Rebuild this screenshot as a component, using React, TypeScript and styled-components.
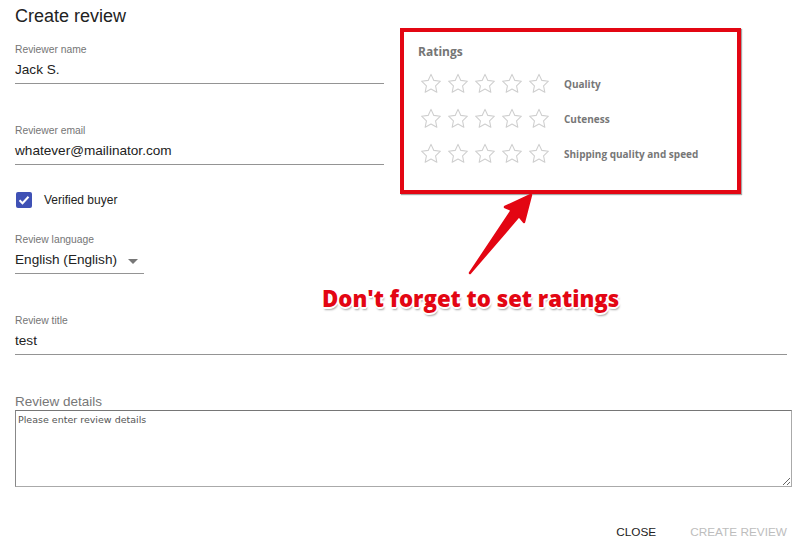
import React from "react";
import styled, { createGlobalStyle } from "styled-components";

const Global = createGlobalStyle`
  html, body { margin: 0; padding: 0; background: #fff; }
  body { font-family: "Liberation Sans", Arial, sans-serif; }
`;

const Page = styled.div`
  position: relative;
  width: 800px;
  height: 549px;
  padding: 0 13px 0 15px;
  box-sizing: border-box;
  overflow: hidden;
`;

const Title = styled.h1`
  margin: 4px 0 0;
  font-size: 18px;
  line-height: 24px;
  font-weight: 400;
  color: #222;
`;

const Top = styled.div`
  display: flex;
  align-items: flex-start;
  gap: 16px;
`;

const LeftCol = styled.div`
  width: 369px;
  padding-top: 15px;
  display: flex;
  flex-direction: column;
`;

const Field = styled.div<{ $width?: string; $mt?: number }>`
  width: ${(p) => p.$width ?? "100%"};
  margin-top: ${(p) => p.$mt ?? 0}px;
  display: flex;
  flex-direction: column;
`;

const Label = styled.div`
  font-size: 10.3px;
  line-height: 13px;
  color: #757575;
`;

const Value = styled.div`
  margin-top: 4px;
  font-size: 13.6px;
  line-height: 20px;
  color: #222;
  padding-bottom: 3px;
  border-bottom: 1px solid #949494;
  display: flex;
  align-items: center;
  justify-content: space-between;
`;

const Caret = styled.span`
  width: 0;
  height: 0;
  border-left: 5px solid transparent;
  border-right: 5px solid transparent;
  border-top: 5px solid #777;
  margin-right: 6px;
  margin-top: 2px;
`;

const CheckRow = styled.label`
  margin-top: 26px;
  display: flex;
  align-items: center;
  gap: 12px;
  height: 18px;
  font-size: 12px;
  color: #222;
`;

const Box = styled.span`
  width: 16px;
  height: 16px;
  margin-left: 1px;
  border-radius: 2px;
  background: #3f51b5;
  display: flex;
  align-items: center;
  justify-content: center;
`;

const Panel = styled.div`
  position: relative;
  width: 341px;
  box-sizing: border-box;
  border: 4px solid #e30613;
  box-shadow: 1px 1px 1px rgba(0, 0, 0, 0.35);
  padding: 12px 14px 19px;
  font-family: "Open Sans", sans-serif;
  color: #757575;
`;

const PanelTitle = styled.div`
  font-size: 12px;
  line-height: 16px;
  font-weight: 700;
  margin-bottom: 6px;
`;

const RatingRow = styled.div`
  display: flex;
  align-items: center;
  height: 35px;
`;

const Stars = styled.div`
  display: flex;
  gap: 5px;
  margin-left: 2px;
  margin-right: 14px;
`;

const RatingLabel = styled.span`
  font-size: 10px;
  font-weight: 700;
  color: #777;
`;

const Details = styled.div`
  margin-top: 39px;
  display: flex;
  flex-direction: column;
  width: 777px;
`;

const DetailsLabel = styled.div`
  font-size: 13.5px;
  line-height: 16px;
  color: #777;
`;

const TextArea = styled.textarea`
  box-sizing: border-box;
  height: 77px;
  width: 777px;
  margin: 0;
  padding: 3px 2px;
  border: 1px solid #aaa;
  border-top-color: #767676;
  border-left-color: #888;
  font-family: "DejaVu Sans", sans-serif;
  font-size: 9.5px;
  color: #333;
  resize: both;
  &::placeholder { color: #555; }
`;

const Actions = styled.div`
  margin-top: 37px;
  display: flex;
  justify-content: flex-end;
  gap: 34px;
`;

const Btn = styled.button<{ $disabled?: boolean }>`
  background: none;
  border: none;
  padding: 0;
  font-family: "Liberation Sans", Arial, sans-serif;
  font-size: 11.8px;
  line-height: 16px;
  color: ${(p) => (p.$disabled ? "#bdbdbd" : "#222")};
`;

const Annotation = styled.div`
  position: absolute;
  left: 322px;
  top: 286px;
  font-family: "Open Sans", sans-serif;
  font-weight: 800;
  font-size: 22.2px;
  line-height: 26px;
  color: #e30613;
  white-space: nowrap;
  text-shadow:
    -1px -1px 0 #fff, 1px -1px 0 #fff, -1px 1px 0 #fff, 1px 1px 0 #fff,
    0 -2px 0 #fff, 0 2px 0 #fff, -2px 0 0 #fff, 2px 0 0 #fff,
    1px 3px 2px rgba(0, 0, 0, 0.35);
`;

const ArrowSvg = styled.svg`
  position: absolute;
  left: 0;
  top: 0;
  pointer-events: none;
`;

const Star = () => (
  <svg width="22" height="21" viewBox="0 0 24 23">
    <path
      d="M12 1.5l3.1 6.6 7.2.9-5.3 5 1.4 7.1L12 17.6l-6.4 3.5 1.4-7.1-5.3-5 7.2-.9z"
      fill="#fff"
      stroke="#cfcfcf"
      strokeWidth="1.2"
      strokeLinejoin="round"
    />
  </svg>
);

const ratings = ["Quality", "Cuteness", "Shipping quality and speed"];

export default function App() {
  return (
    <Page>
      <Global />
      <Title>Create review</Title>
      <Top>
        <LeftCol>
          <Field>
            <Label>Reviewer name</Label>
            <Value>Jack S.</Value>
          </Field>
          <Field $mt={40}>
            <Label>Reviewer email</Label>
            <Value>whatever@mailinator.com</Value>
          </Field>
          <CheckRow>
            <Box>
              <svg width="12" height="10" viewBox="0 0 12 10">
                <path d="M1.5 5.2l3 3 6-6.5" fill="none" stroke="#fff" strokeWidth="2" />
              </svg>
            </Box>
            Verified buyer
          </CheckRow>
          <Field $mt={24} $width="129px">
            <Label>Review language</Label>
            <Value>
              English (English)
              <Caret />
            </Value>
          </Field>
        </LeftCol>
        <Panel>
          <PanelTitle>Ratings</PanelTitle>
          {ratings.map((r) => (
            <RatingRow key={r}>
              <Stars>
                {[0, 1, 2, 3, 4].map((i) => (
                  <Star key={i} />
                ))}
              </Stars>
              <RatingLabel>{r}</RatingLabel>
            </RatingRow>
          ))}
        </Panel>
      </Top>
      <Field $mt={40} $width="772px">
        <Label>Review title</Label>
        <Value>test</Value>
      </Field>
      <Details>
        <DetailsLabel>Review details</DetailsLabel>
        <TextArea placeholder="Please enter review details" />
      </Details>
      <Actions>
        <Btn>CLOSE</Btn>
        <Btn $disabled>CREATE REVIEW</Btn>
      </Actions>
      <ArrowSvg width="800" height="549">
        <path
          d="M531 195 L524 222 L519 216 L470 273 L512 210 L505 207 Z"
          fill="#e30613"
          stroke="#e30613"
          strokeWidth="2.5"
          strokeLinejoin="round"
        />
      </ArrowSvg>
      <Annotation>Don't forget to set ratings</Annotation>
    </Page>
  );
}
